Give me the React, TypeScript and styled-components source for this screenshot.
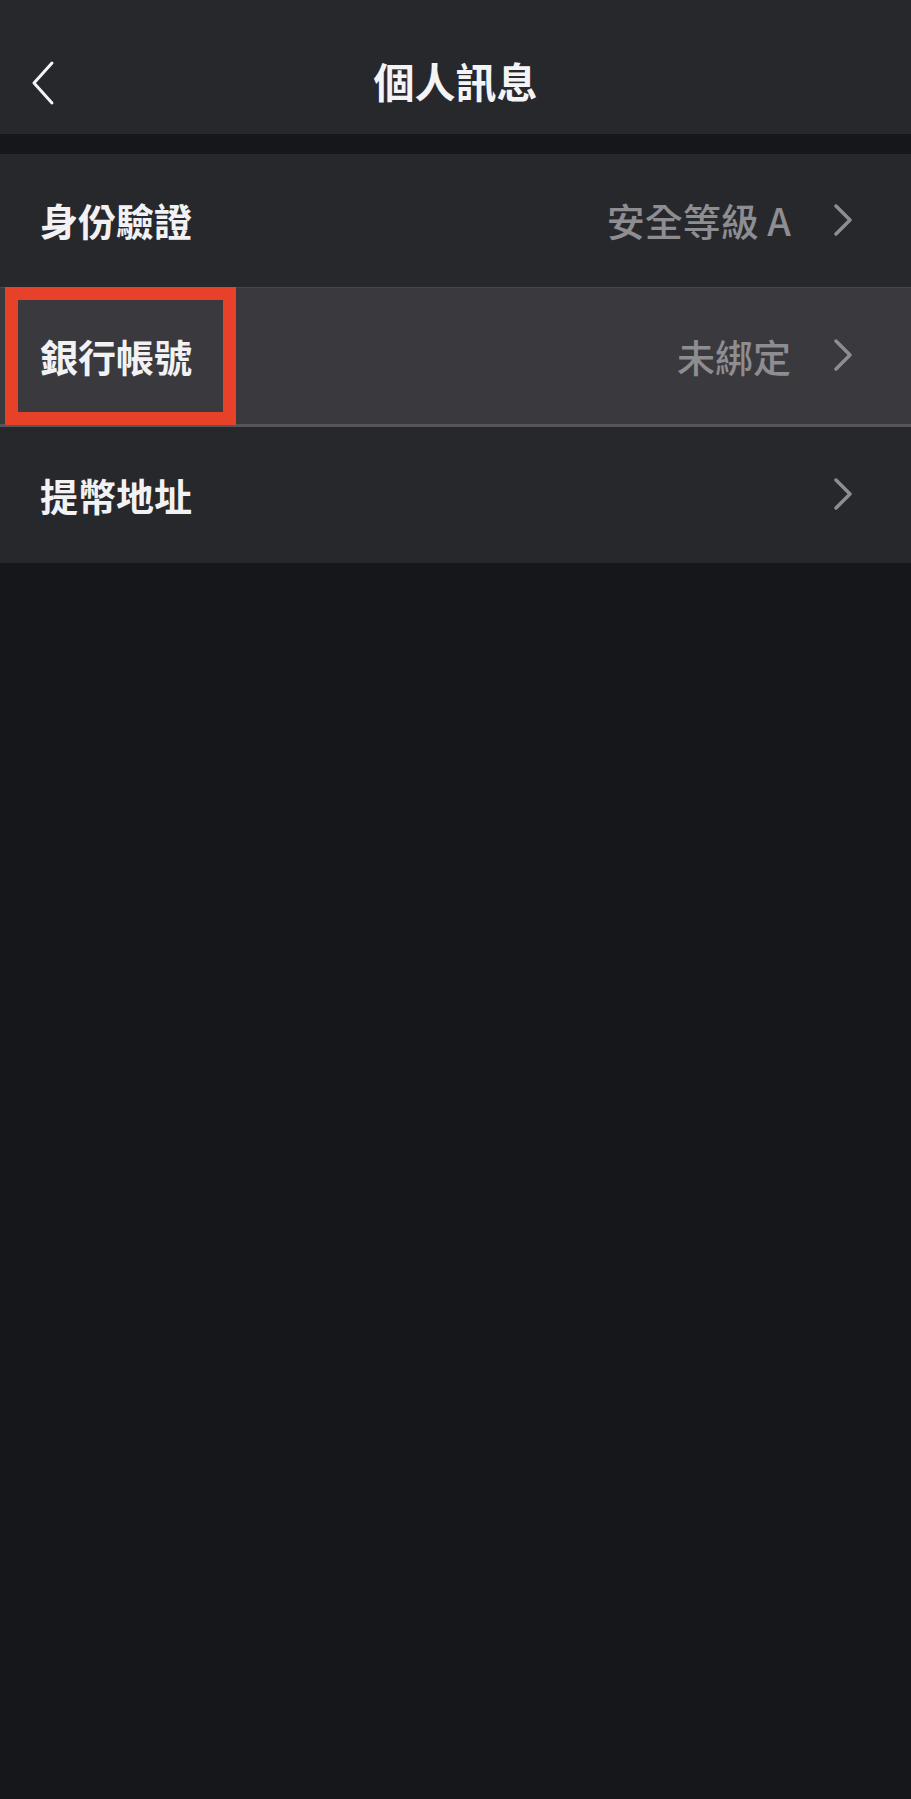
import React, { FC } from 'react';
import styled, { createGlobalStyle } from 'styled-components';

const GlobalStyle = createGlobalStyle`
  html, body {
    margin: 0;
    padding: 0;
    background: #15171b;
  }
  * {
    box-sizing: border-box;
  }
`;

const Page = styled.div`
  min-height: 1799px;
  background: #15171b;
  font-family: 'Noto Sans CJK TC', 'Noto Sans', sans-serif;
  color: #f2f2f4;
`;

const Header = styled.header`
  position: relative;
  height: 134px;
  padding-top: 26px;
  background: #27282c;
  display: flex;
  align-items: center;
  justify-content: center;
`;

const BackButton = styled.button`
  position: absolute;
  left: 30px;
  top: 60px;
  padding: 0;
  border: none;
  background: transparent;
  display: flex;
  cursor: pointer;
`;

const Title = styled.h1`
  margin: 0;
  font-size: 41px;
  font-weight: 700;
  letter-spacing: 0;
  color: #f4f4f6;
`;

const List = styled.div`
  margin-top: 20px;
  display: flex;
  flex-direction: column;
`;

const Row = styled.div<{ $active?: boolean; $height: number }>`
  position: relative;
  height: ${(p) => p.$height}px;
  padding: 0 58px 2px 40px;
  display: flex;
  align-items: center;
  background: ${(p) => (p.$active ? '#3a3a3e' : '#27282c')};
  border-top: ${(p) => (p.$active ? '1px solid #46464a' : 'none')};
  border-bottom: ${(p) => (p.$active ? '3px solid #55555a' : 'none')};
`;

const Label = styled.span`
  flex: 1;
  font-size: 38px;
  font-weight: 700;
  color: #f2f2f4;
`;

const Value = styled.span`
  font-size: 38px;
  font-weight: 500;
  color: #8d8d92;
  margin-right: 42px;
`;

const Highlight = styled.div`
  position: absolute;
  left: 5px;
  top: -1px;
  width: 231px;
  height: 138px;
  border: 13px solid #e8412a;
  pointer-events: none;
`;

const BackIcon: FC = () => (
  <svg width="26" height="46" viewBox="0 0 26 46">
    <polyline
      points="22,3 4,23 22,43"
      fill="none"
      stroke="#f4f4f6"
      strokeWidth="3"
      strokeLinecap="round"
      strokeLinejoin="round"
    />
  </svg>
);

const Chevron: FC = () => (
  <svg width="20" height="32" viewBox="0 0 20 32">
    <polyline
      points="3,2 17,16 3,30"
      fill="none"
      stroke="#8d8d92"
      strokeWidth="3.5"
      strokeLinecap="round"
      strokeLinejoin="round"
    />
  </svg>
);

interface Item {
  label: string;
  value?: string;
  height: number;
  active?: boolean;
}

const items: Item[] = [
  { label: '身份驗證', value: '安全等級 A', height: 133 },
  { label: '銀行帳號', value: '未綁定', height: 140, active: true },
  { label: '提幣地址', height: 136 },
];

const App: FC = () => {
  return (
    <Page>
      <GlobalStyle />
      <Header>
        <BackButton aria-label="back">
          <BackIcon />
        </BackButton>
        <Title>個人訊息</Title>
      </Header>
      <List>
        {items.map((item) => (
          <Row key={item.label} $active={item.active} $height={item.height}>
            {item.active && <Highlight />}
            <Label>{item.label}</Label>
            {item.value && <Value>{item.value}</Value>}
            <Chevron />
          </Row>
        ))}
      </List>
    </Page>
  );
};

export default App;
